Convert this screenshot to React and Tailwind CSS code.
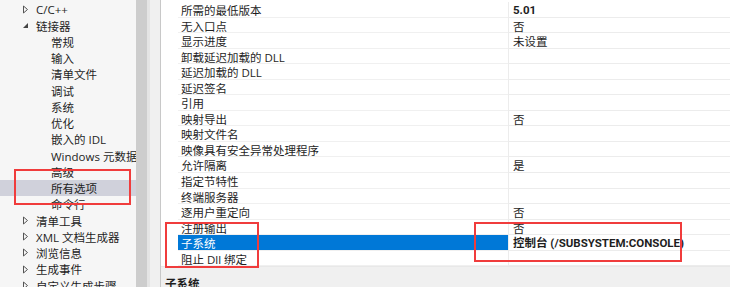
import React from "react";

const tree = [
  { label: "C/C++", level: 0, arrow: "closed" },
  { label: "链接器", level: 0, arrow: "open" },
  { label: "常规", level: 1 },
  { label: "输入", level: 1 },
  { label: "清单文件", level: 1 },
  { label: "调试", level: 1 },
  { label: "系统", level: 1 },
  { label: "优化", level: 1 },
  { label: "嵌入的 IDL", level: 1 },
  { label: "Windows 元数据", level: 1 },
  { label: "高级", level: 1 },
  { label: "所有选项", level: 1, selected: true },
  { label: "命令行", level: 1 },
  { label: "清单工具", level: 0, arrow: "closed" },
  { label: "XML 文档生成器", level: 0, arrow: "closed" },
  { label: "浏览信息", level: 0, arrow: "closed" },
  { label: "生成事件", level: 0, arrow: "closed" },
  { label: "自定义生成步骤", level: 0, arrow: "closed" },
];

const props = [
  { name: "所需的最低版本", value: "5.01", bold: true },
  { name: "无入口点", value: "否" },
  { name: "显示进度", value: "未设置" },
  { name: "卸载延迟加载的 DLL" },
  { name: "延迟加载的 DLL" },
  { name: "延迟签名" },
  { name: "引用" },
  { name: "映射导出", value: "否" },
  { name: "映射文件名" },
  { name: "映像具有安全异常处理程序" },
  { name: "允许隔离", value: "是" },
  { name: "指定节特性" },
  { name: "终端服务器" },
  { name: "逐用户重定向", value: "否" },
  { name: "注册输出", value: "否" },
  { name: "子系统", value: "控制台 (/SUBSYSTEM:CONSOLE)", bold: true, selected: true },
  { name: "阻止 Dll 绑定" },
];

function Arrow({ type }) {
  if (type === "open") {
    return (
      <svg width="7" height="7" viewBox="0 0 7 7" className="shrink-0">
        <path d="M6 1 L6 6 L1 6 Z" fill="#444" />
      </svg>
    );
  }
  return (
    <svg width="7" height="9" viewBox="0 0 7 9" className="shrink-0">
      <path d="M1.5 1 L5.5 4.5 L1.5 8 Z" fill="none" stroke="#555" strokeWidth="1" />
    </svg>
  );
}

export default function App() {
  return (
    <div
      className="relative w-[730px] h-[287px] overflow-hidden flex bg-[#f0f0f0] text-[11.5px] text-[#1e1e1e]"
      style={{ fontFamily: '"Open Sans", "Noto Sans CJK SC", sans-serif' }}
    >
      {/* tree */}
      <div className="w-[136px] shrink-0 bg-[#f6f6f6] pt-[1px]">
        {tree.map((t, i) => (
          <div
            key={i}
            className={`h-[16.25px] flex items-center leading-none whitespace-nowrap overflow-hidden ${
              t.selected ? "bg-[#d0d1db]" : ""
            } ${t.level === 0 ? "pl-[22px]" : "pl-[51px]"}`}
          >
            {t.arrow && (
              <span className="w-[14px] flex items-center">
                <Arrow type={t.arrow} />
              </span>
            )}
            <span className="pt-[2px]">{t.label}</span>
          </div>
        ))}
      </div>

      {/* tree scrollbar */}
      <div className="w-[11px] shrink-0 bg-[#cdcdcd]" />
      <div className="w-[3px] shrink-0 bg-[#e4e4e4]" />
      <div className="w-[10px] shrink-0 bg-[#f0f0f0]" />

      {/* property grid */}
      <div className="flex-1 flex flex-col border-l border-[#c8c8c8]">
        <div className="h-[2px] bg-[#e0e0e0]" />
        <div className="h-[269px] bg-white flex flex-col pt-[2px]">
          {props.map((p, i) => (
            <div key={i} className="h-[15.55px] flex shrink-0 leading-none">
              <div className="w-[17px] shrink-0 bg-white" />
              <div
                className={`w-[330px] shrink-0 flex items-center pl-[3px] border-b border-[#f0f0f0] whitespace-nowrap ${
                  p.selected ? "bg-[#0078d7] text-white" : ""
                }`}
              >
                <span className="pt-[3px]">{p.name}</span>
              </div>
              <div
                className={`flex-1 flex items-center pl-[4px] border-l border-b border-[#ececec] whitespace-nowrap ${
                  p.bold ? "font-bold" : ""
                }`}
                style={p.bold ? { fontFamily: 'Roboto, "Noto Sans CJK SC", sans-serif' } : undefined}
              >
                <span className="pt-[3px]">{p.value || ""}</span>
              </div>
            </div>
          ))}
        </div>
        <div className="h-[2px] bg-[#a8a8a8]" />
        <div className="flex-1 bg-[#f0f0f0] border-t border-[#e8e8e8] pl-[4px] pt-[11px] font-bold leading-none">
          子系统
        </div>
      </div>

      {/* annotation boxes */}
      <div className="absolute left-[14px] top-[169px] w-[117px] h-[36px] border-2 border-[#f03c3c]" />
      <div className="absolute left-[165px] top-[222px] w-[94px] h-[46px] border-2 border-[#f03c3c]" />
      <div className="absolute left-[474px] top-[222px] w-[208px] h-[40px] border-2 border-[#f03c3c]" />
    </div>
  );
}
